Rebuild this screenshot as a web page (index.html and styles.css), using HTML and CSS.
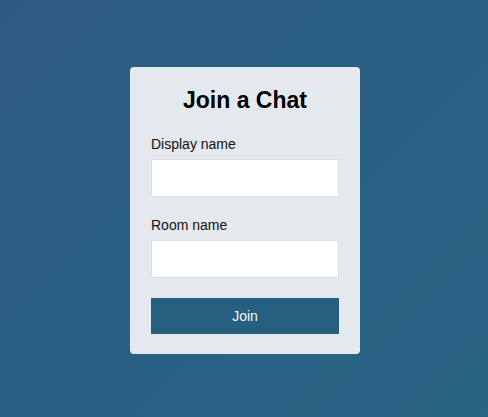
FILE: index.html
```html
<!DOCTYPE html>
<html lang="en">
<head>
<meta charset="utf-8">
<title>Join a Chat</title>
<link rel="stylesheet" href="styles.css">
</head>
<body>
<main class="page">
  <form class="card">
    <h1 class="title">Join a Chat</h1>
    <label class="field">
      <span class="label">Display name</span>
      <input class="input" type="text">
    </label>
    <label class="field">
      <span class="label">Room name</span>
      <input class="input" type="text">
    </label>
    <button class="button" type="button">Join</button>
  </form>
</main>
</body>
</html>
```
FILE: styles.css
```css
* { box-sizing: border-box; }
html, body { margin: 0; padding: 0; }
body {
  font-family: "Liberation Sans", Arial, sans-serif;
  background: linear-gradient(135deg, #2d5a83 0%, #2a6586 100%);
  min-height: 100vh;
}
.page {
  min-height: 100vh;
  display: flex;
  align-items: center;
  justify-content: center;
  padding: 3px 0 0 2px;
}
.card {
  width: 230px;
  background: #e4e9ee;
  border-radius: 4px;
  padding: 20px 21px;
  display: flex;
  flex-direction: column;
}
.title {
  margin: 0 0 22px;
  font-size: 23px;
  font-weight: bold;
  text-align: center;
  color: #000;
}
.field {
  display: flex;
  flex-direction: column;
  gap: 7px;
  margin-bottom: 20px;
}
.label {
  font-size: 14px;
  color: #111;
}
.input {
  height: 38px;
  border: 1px solid #dcdfe3;
  background: #fff;
  border-radius: 0;
  font: inherit;
  padding: 0 8px;
}
.button {
  height: 36px;
  border: none;
  background: #265f80;
  color: #f4f8fb;
  font-family: inherit;
  font-size: 14px;
}
```
